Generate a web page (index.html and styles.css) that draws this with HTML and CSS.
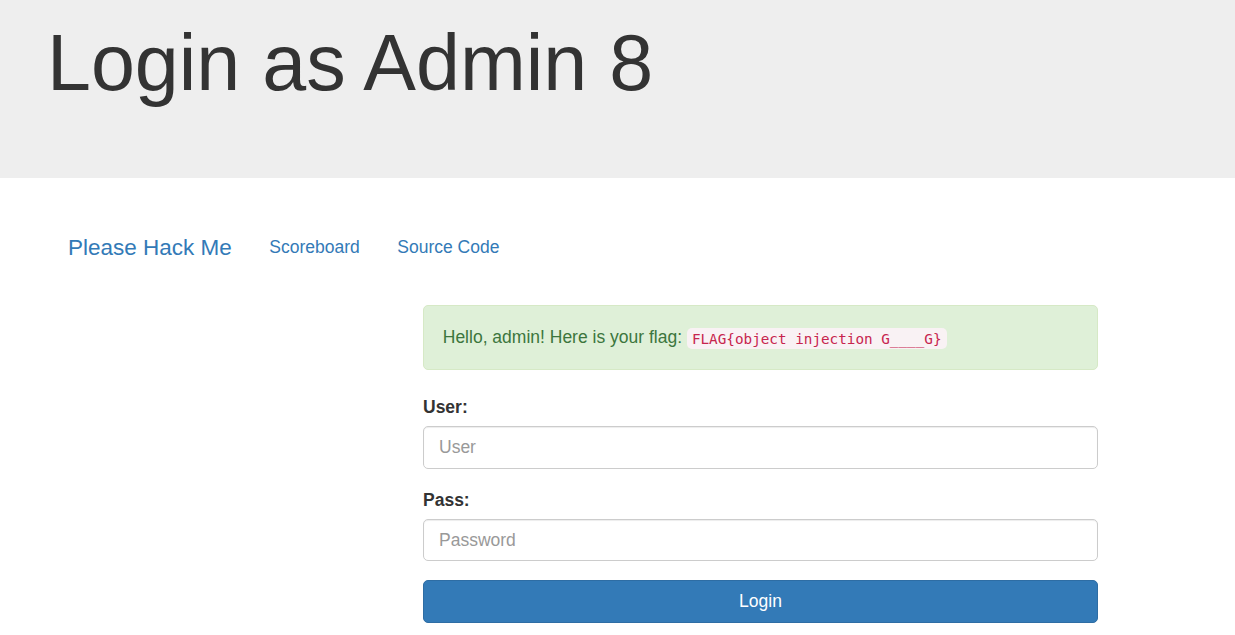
FILE: index.html
```html
<!DOCTYPE html>
<html lang="en">
<head>
<meta charset="utf-8">
<title>Login as Admin 8</title>
<link rel="stylesheet" href="styles.css">
</head>
<body>
<header class="jumbotron">
  <h1 class="title">Login as Admin 8</h1>
</header>
<nav class="navbar">
  <a class="brand" href="#">Please Hack Me</a>
  <a class="nav-link" href="#">Scoreboard</a>
  <a class="nav-link" href="#">Source Code</a>
</nav>
<main class="main">
  <div class="col">
    <div class="alert">Hello, admin! Here is your flag: <code class="flag">FLAG{object injection G____G}</code></div>
    <form class="form">
      <div class="form-group">
        <label class="label" for="user">User:</label>
        <input class="input" id="user" type="text" placeholder="User">
      </div>
      <div class="form-group">
        <label class="label" for="pass">Pass:</label>
        <input class="input" id="pass" type="password" placeholder="Password">
      </div>
      <button class="btn" type="button">Login</button>
    </form>
  </div>
</main>
</body>
</html>
```
FILE: styles.css
```css
* { box-sizing: border-box; }
html, body { margin: 0; padding: 0; }
body {
  font-family: "Liberation Sans", Arial, sans-serif;
  font-size: 17.5px;
  line-height: 25px;
  color: #333;
  background: #fff;
}
.jumbotron {
  background: #eee;
  height: 178px;
  padding: 20px 47px 0;
  margin-bottom: 38px;
}
.title {
  margin: 0;
  font-size: 79px;
  line-height: 1.1;
  font-weight: 400;
  color: #333;
}
.navbar {
  display: flex;
  align-items: stretch;
  height: 62.5px;
  padding-left: 49.25px;
  margin-bottom: 26px;
}
.navbar a { text-decoration: none; color: #337ab7; }
.brand {
  font-size: 22.5px;
  line-height: 25px;
  padding: 18.75px;
}
.nav-link {
  padding: 18.75px;
  line-height: 25px;
}
.main { padding-left: 423px; }
.col { width: 675px; }
.alert {
  background: #dff0d8;
  border: 1.25px solid #d6e9c6;
  color: #3c763d;
  border-radius: 5px;
  padding: 19.5px 18.75px 18px;
  margin-bottom: 25px;
}
.flag {
  font-family: "DejaVu Sans Mono", monospace;
  font-size: 14.3px;
  color: #c7254e;
  background: #f9f2f4;
  border-radius: 5px;
  padding: 2.5px 5px;
}
.form-group { margin-bottom: 18.75px; }
.label {
  display: block;
  font-weight: 700;
  margin-bottom: 6.25px;
}
.input {
  display: block;
  width: 100%;
  height: 42.5px;
  padding: 7.5px 15px;
  font: inherit;
  color: #555;
  background: #fff;
  border: 1.25px solid #ccc;
  border-radius: 5px;
  box-shadow: inset 0 1px 1px rgba(0,0,0,.075);
}
.input::placeholder { color: #999; }
.btn {
  display: block;
  width: 100%;
  height: 42.5px;
  font: inherit;
  color: #fff;
  background: #337ab7;
  border: 1.25px solid #2e6da4;
  border-radius: 5px;
  padding: 7.5px 15px;
}
```
